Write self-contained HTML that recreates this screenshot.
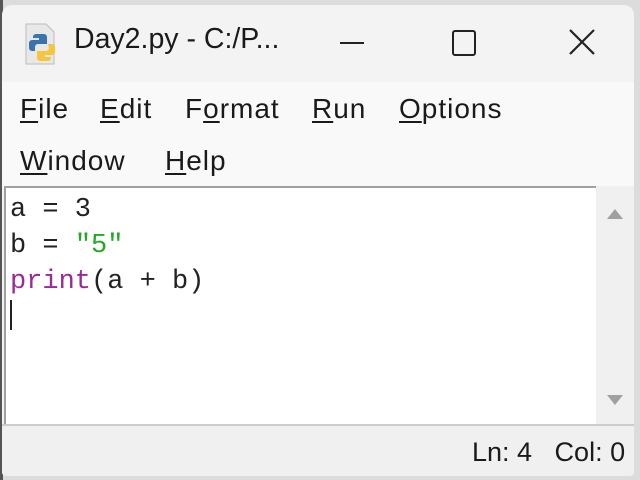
<!DOCTYPE html>
<html><head><style>
*{margin:0;padding:0;box-sizing:border-box}
body{width:640px;height:480px;overflow:hidden;background:#dcdcdc;position:relative;font-family:"Liberation Sans",sans-serif}
.win{position:absolute;left:2px;top:5px;width:632px;height:471px;background:#f3f3f3;border-radius:10px 10px 4px 4px;overflow:hidden}
.t{position:absolute;color:#1a1a1a;white-space:nowrap}
u{text-decoration:underline;text-underline-offset:3px}
.menu{position:absolute;left:0;top:77px;width:632px;height:106px;background:#f9f9f9}
.menu .t{font-size:28px}
.ed{position:absolute;left:2px;top:181px;width:592px;height:240px;background:#fff;border-top:2px solid #a0a0a0;border-left:2px solid #a0a0a0}
.sb{position:absolute;left:594px;top:181px;width:38px;height:240px;background:#f0f0f0}
.code{position:absolute;left:4px;top:4px;font-family:"Liberation Mono",monospace;font-size:27px;line-height:36px;color:#222;white-space:pre}
.st{position:absolute;left:0;top:419px;width:632px;height:52px;background:#f0f0f0;border-top:2px solid #ccc}
</style></head><body>
<div style="position:absolute;left:0;top:0;width:3px;height:480px;background:#555"></div>
<div class="win">
<svg style="position:absolute;left:22px;top:17px" width="36" height="44" viewBox="0 0 36 44">
<path d="M2 2h20l8 8v32H2z" fill="#e8e8e8" stroke="#bbb"/>
<path d="M12 12h8a3 3 0 0 1 3 3v7h-9a3 3 0 0 0-3 3v4H8a3 3 0 0 1-3-3v-5a3 3 0 0 1 3-3h7v-2h-6v-1a3 3 0 0 1 3-3z" fill="#3a74b0"/>
<path d="M24 22h4a3 3 0 0 1 3 3v5a3 3 0 0 1-3 3h-7v2h6v1a3 3 0 0 1-3 3h-8a3 3 0 0 1-3-3v-7h9a3 3 0 0 0 3-3z" fill="#f6c53d"/>
</svg>
<div class="t" style="left:72px;top:18px;font-size:28.5px">Day2.py - C:/P...</div>
<div style="position:absolute;left:338px;top:37px;width:24px;height:2px;background:#222"></div>
<div style="position:absolute;left:450px;top:25px;width:24px;height:26px;border:2px solid #222;border-radius:3px"></div>
<svg style="position:absolute;left:566px;top:23px" width="28" height="28"><path d="M2 2L26 26M26 2L2 26" stroke="#222" stroke-width="2.2"/></svg>
<div class="menu">
<div class="t" style="left:18px;top:11px;letter-spacing:1px"><u>F</u>ile</div>
<div class="t" style="left:98px;top:11px;letter-spacing:1px"><u>E</u>dit</div>
<div class="t" style="left:183px;top:11px;letter-spacing:1px">F<u>o</u>rmat</div>
<div class="t" style="left:310px;top:11px;letter-spacing:1px"><u>R</u>un</div>
<div class="t" style="left:397px;top:11px;letter-spacing:1px"><u>O</u>ptions</div>
<div class="t" style="left:18px;top:63px;letter-spacing:1px"><u>W</u>indow</div>
<div class="t" style="left:163px;top:63px;letter-spacing:1px"><u>H</u>elp</div>
</div>
<div class="ed"><div class="code">a = 3
b = <span style="color:#22a822">"5"</span>
<span style="color:#9a2a9a">print</span>(a + b)
<span style="display:inline-block;width:2px;height:30px;background:#222;vertical-align:-6px"></span></div></div>
<div class="sb">
<svg style="position:absolute;left:10px;top:22px" width="18" height="12"><path d="M9 1L17 11H1z" fill="#a0a0a0"/></svg>
<svg style="position:absolute;left:10px;top:208px" width="18" height="12"><path d="M1 1H17L9 11z" fill="#a0a0a0"/></svg>
</div>
<div class="st"><div class="t" style="left:470px;top:11px;font-size:27px">Ln: 4&nbsp;&nbsp; Col: 0</div></div>
</div>
</body></html>
